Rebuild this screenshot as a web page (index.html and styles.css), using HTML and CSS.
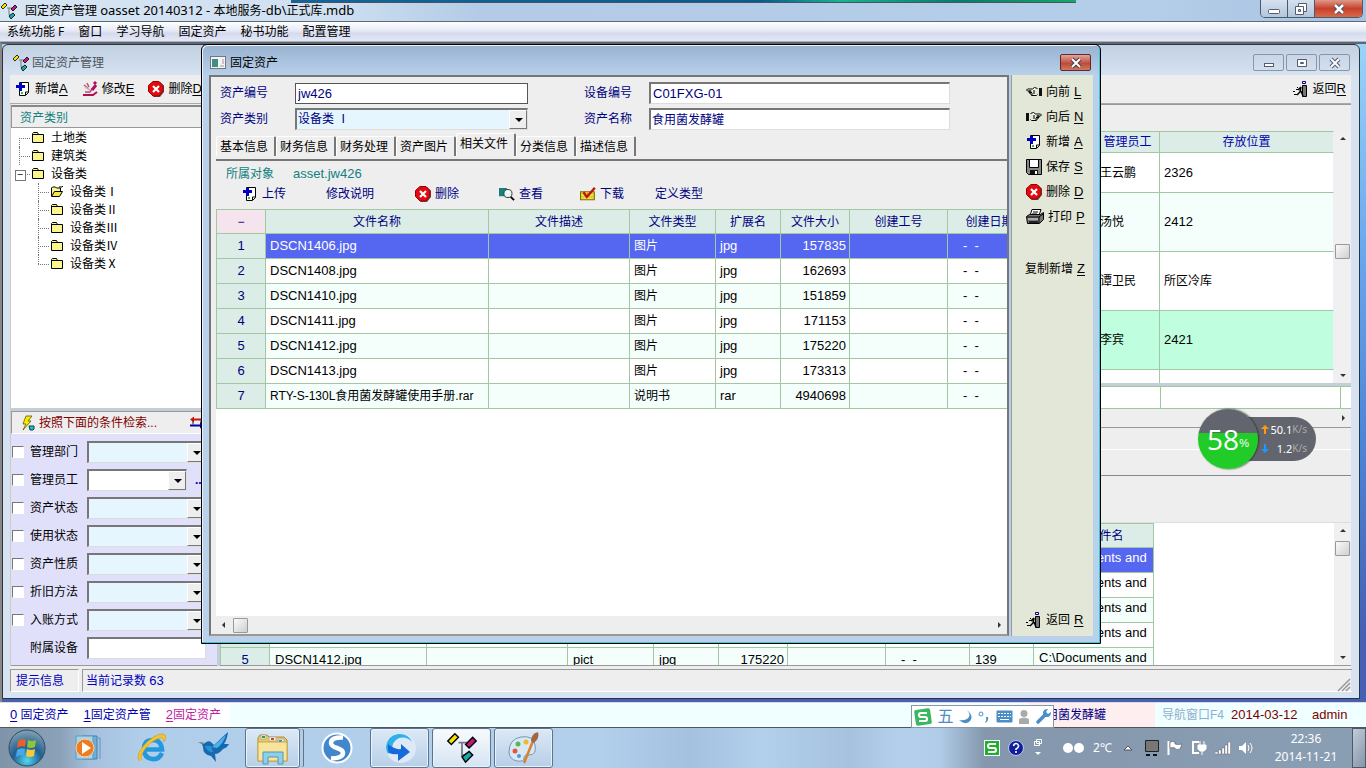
FILE: index.html
```html
<!DOCTYPE html>
<html lang="zh-CN">
<head>
<meta charset="utf-8">
<title>固定资产管理 oasset</title>
<link rel="stylesheet" href="styles.css">
</head>
<body>
<svg class="defs" aria-hidden="true">
  <symbol id="i-nodes" viewBox="0 0 18 18">
    <path d="M7 6h5M9 6v7h4" fill="none" stroke="#778" />
    <path d="M1 5l4-4 2 2-4 4z" fill="#f2e600" stroke="#000" stroke-width=".8"/>
    <path d="M11 7l4-4 2 2-4 4z" fill="#c01878" stroke="#000" stroke-width=".8"/>
    <path d="M9 14l4-3 2 2-4 4z" fill="#18a8a8" stroke="#000" stroke-width=".8"/>
  </symbol>
  <symbol id="i-add" viewBox="0 0 14 16">
    <path d="M3.500 1.500h9v10l-3 3h-6z" fill="#fff" stroke="#000"/>
    <path d="M9.500 14v-3h3" fill="none" stroke="#000"/>
    <path d="M3 2h3v2h3v3h-3v3h-3v-3h-3v-3h3z" fill="#0000c0"/>
    <path d="M5 12h2" stroke="#3b3" stroke-width="2"/>
  </symbol>
  <symbol id="i-edit" viewBox="0 0 16 16">
    <path d="M1 14h10l4-3" fill="none" stroke="#b01050" stroke-width="2"/>
    <path d="M3 11h5l2-3M2 4l4 3M5 2l2 4" fill="none" stroke="#c84878" stroke-width="1.500"/>
    <path d="M10 9l4-5M12 3l2-2" stroke="#b01060" stroke-width="3"/>
    <path d="M3 6l5 3" stroke="#bbb" stroke-width="2"/>
  </symbol>
  <symbol id="i-del" viewBox="0 0 16 16">
    <path d="M5 1h7l4 4v6l-4 5H6l-4-4z" fill="#555"/>
    <path d="M5 .5h6l4 4v6l-4 4.500H5l-4.500-4.500v-6z" fill="#e00a10" stroke="#900"/>
    <path d="M5 5l6 6M11 5l-6 6" stroke="#fff" stroke-width="2.200"/>
  </symbol>
  <symbol id="i-exit" viewBox="0 0 16 16">
    <path d="M9.500 4.500h4v11h-4z" fill="#777" stroke="#000"/>
    <path d="M9.500 .5h3v2h-3z" fill="#fff" stroke="#000080"/>
    <path d="M0 10.500h2M3 8.500h2M1 13.500h3M4 6.500h1" stroke="#000"/>
    <path d="M4 14l3-3 1-5M8 10l2 5M5 9l3-3" stroke="#000" stroke-width="1.500" fill="none"/>
  </symbol>
  <symbol id="i-folder" viewBox="0 0 14 13">
    <path d="M1.500 11.500v-9l1-1h4l1 2h5v8z" fill="#fbf68c" stroke="#000"/>
    <path d="M2 3.500h6" stroke="#000"/>
  </symbol>
  <symbol id="i-open" viewBox="0 0 14 13">
    <path d="M1.500 11V3l1-1h3l1 1h4v3" fill="#fbf68c" stroke="#000"/>
    <path d="M1.500 11.500l3-5h8l-3 5z" fill="#f0e850" stroke="#000"/>
    <path d="M9 2h3l1-1" stroke="#000" fill="none"/>
  </symbol>
  <symbol id="i-bolt" viewBox="0 0 14 16">
    <path d="M5 1h6L7 6h3l-8 9 3-6H2z" fill="#f2ee00" stroke="#665500" stroke-width=".8"/>
    <path d="M8 11h5v3l-1 1h-3z" fill="#20c0d0" stroke="#044"/>
  </symbol>
  <symbol id="i-swap" viewBox="0 0 14 12">
    <path d="M2 3h12" stroke="#d01010" stroke-width="2"/>
    <path d="M4 0L0 3l4 3z" fill="#d01010"/>
    <path d="M0 9h10" stroke="#0000b0" stroke-width="2"/>
    <path d="M10 5.500l4 3.500-4 3z" fill="#0000b0"/>
    <path d="M3 4v4M11 4v4" stroke="#222"/>
  </symbol>
  <symbol id="i-form" viewBox="0 0 16 14">
    <rect x=".5" y=".5" width="15" height="12" fill="#f4f4f4" stroke="#777"/>
    <rect x="2" y="3" width="6" height="8" fill="#3f8f86"/>
    <path d="M13 3v5M10 10h4" stroke="#999"/>
  </symbol>
  <symbol id="i-prev" viewBox="0 0 16 12">
    <path d="M13 2h3v8h-3z" fill="#111"/>
    <path d="M11.500 2.500l-3-1-2 1.500h-5l-1 1 1 1h4M5 5H3v1.500h3M4 6.500v1.500h3M5.500 8.500v1h5l1-1" fill="#fff" stroke="#000"/>
    <path d="M7 5h2M7 7h2" stroke="#000"/>
  </symbol>
  <symbol id="i-next" viewBox="0 0 16 12">
    <path d="M0 2h3v8H0z" fill="#111"/>
    <path d="M4.500 2.500l3-1 2 1.500h5l1 1-1 1h-4M11 5h2v1.500h-3M12 6.500v1.500H9M10.500 8.500v1h-5l-1-1" fill="#fff" stroke="#000"/>
    <path d="M7 5h2M7 7h2" stroke="#000"/>
  </symbol>
  <symbol id="i-save" viewBox="0 0 16 16">
    <path d="M.5 .5h15v15h-13l-2-2z" fill="#888" stroke="#000"/>
    <path d="M3.500 .5h9v8h-9z" fill="#fff" stroke="#000"/>
    <path d="M4 11h8v4H4z" fill="#111"/><path d="M9 12h2v3H9z" fill="#fff"/>
  </symbol>
  <symbol id="i-print" viewBox="0 0 18 16">
    <path d="M6 .5h9l-2 6H4z" fill="#fff" stroke="#000"/>
    <path d="M7 3h5M6 5h5" stroke="#000"/>
    <path d="M.5 7.500l3-2h11l3-2v7l-4 4h-12z" fill="#777" stroke="#000"/>
    <path d="M1 8h12l4-3M13 8v6" fill="none" stroke="#000"/>
    <path d="M2 10h10" stroke="#ddd"/><path d="M3 12h9v2H3z" fill="#222"/>
  </symbol>
  <symbol id="i-view" viewBox="0 0 17 15">
    <path d="M0 1h8l2 3v6H0z" fill="#178078"/>
    <circle cx="9.500" cy="7" r="4.300" fill="#e8f4f4" stroke="#333"/>
    <path d="M8 5l3 1" stroke="#fff"/><path d="M12.500 10.500L16 14" stroke="#000" stroke-width="2"/>
  </symbol>
  <symbol id="i-down" viewBox="0 0 14 13">
    <path d="M.5 4.500h12v7H.5z" fill="#efe23c" stroke="#7a6c00"/>
    <path d="M2 6h9M2 9h9" stroke="#b8a810" stroke-dasharray="1 1"/>
    <path d="M3 5l3 4 7-8" fill="none" stroke="#c01010" stroke-width="2"/>
  </symbol>
</svg>

<header class="app-title">
  <svg class="i18"><use href="#i-nodes"/></svg>
  <h1>固定资产管理 <span>oasset 20140312 - </span>本地服务<span>-db\</span>正式库<span>.mdb</span></h1>
  <div class="peek"></div>
  <div class="caption">
    <button aria-label="最小化"><svg width="14" height="12"><rect x="1.500" y="6.500" width="11" height="4" rx="1" fill="#fff" stroke="#555c70"/></svg></button>
    <button aria-label="还原"><svg width="14" height="14"><path d="M4.500 1.500h8v8h-8z" fill="#fff" stroke="#555c70"/><path d="M1.500 4.500h8v8h-8z" fill="#fff" stroke="#555c70"/><path d="M4.500 7.500h2v2h-2z" fill="#b5c8dc" stroke="#555c70"/></svg></button>
    <button class="close" aria-label="关闭"><svg width="14" height="12"><path d="M3 2l8 8M11 2l-8 8" stroke="#444c60" stroke-width="4.500"/><path d="M3 2l8 8M11 2l-8 8" stroke="#fff" stroke-width="2.500"/></svg></button>
  </div>
</header>

<nav class="menubar">
  <button>系统功能 F</button><button>窗口</button><button>学习导航</button><button>固定资产</button><button>秘书功能</button><button>配置管理</button>
</nav>

<main class="workspace">
  <section class="win main-win">
    <div class="win-title">
      <svg class="i18"><use href="#i-nodes"/></svg><h2>固定资产管理</h2>
      <div class="win-buttons">
        <button aria-label="最小化"><svg width="14" height="12"><rect x="2.500" y="6.500" width="9" height="3" fill="#fff" stroke="#555c70"/></svg></button>
        <button aria-label="最大化"><svg width="14" height="12"><path d="M2.500 2.500h9v7h-9z" fill="#fff" stroke="#555c70"/><path d="M5.500 5.500h3v1h-3z" stroke="#555c70" fill="none"/></svg></button>
        <button aria-label="关闭"><svg width="14" height="12"><path d="M3 2l8 8M11 2l-8 8" stroke="#555c70" stroke-width="4"/><path d="M3 2l8 8M11 2l-8 8" stroke="#fff" stroke-width="2"/></svg></button>
      </div>
    </div>
    <div class="toolbar">
      <button><svg class="i16"><use href="#i-add"/></svg>新增<u>A</u></button>
      <button><svg class="i16"><use href="#i-edit"/></svg>修改<u>E</u></button>
      <button><svg class="i16"><use href="#i-del"/></svg>删除<u>D</u></button>
      <button class="right"><svg class="i16"><use href="#i-exit"/></svg>返回<u>R</u></button>
    </div>
    <div class="panes">
      <aside class="left">
        <h3 class="tree-head">资产类别</h3>
        <ul class="tree">
          <li><svg class="i14"><use href="#i-folder"/></svg>土地类</li>
          <li><svg class="i14"><use href="#i-folder"/></svg>建筑类</li>
          <li class="expanded"><svg class="i14"><use href="#i-folder"/></svg>设备类
            <ul>
              <li><svg class="i14"><use href="#i-open"/></svg>设备类<b>Ⅰ</b></li>
              <li><svg class="i14"><use href="#i-folder"/></svg>设备类<b>Ⅱ</b></li>
              <li><svg class="i14"><use href="#i-folder"/></svg>设备类<b>Ⅲ</b></li>
              <li><svg class="i14"><use href="#i-folder"/></svg>设备类<b>Ⅳ</b></li>
              <li><svg class="i14"><use href="#i-folder"/></svg>设备类<b>Ⅹ</b></li>
            </ul>
          </li>
        </ul>
        <div class="search-head"><svg class="i16"><use href="#i-bolt"/></svg><span>按照下面的条件检索...</span><svg class="i14"><use href="#i-swap"/></svg></div>
        <form class="filters">
          <div><label><input type="checkbox">管理部门</label><span class="sel"><select aria-label="管理部门"><option></option></select></span></div>
          <div><label><input type="checkbox">管理员工</label><span class="sel plain short"><select aria-label="管理员工"><option></option></select></span><button type="button" class="more">...</button></div>
          <div><label><input type="checkbox">资产状态</label><span class="sel"><select aria-label="资产状态"><option></option></select></span></div>
          <div><label><input type="checkbox">使用状态</label><span class="sel"><select aria-label="使用状态"><option></option></select></span></div>
          <div><label><input type="checkbox">资产性质</label><span class="sel"><select aria-label="资产性质"><option></option></select></span></div>
          <div><label><input type="checkbox">折旧方法</label><span class="sel"><select aria-label="折旧方法"><option></option></select></span></div>
          <div><label><input type="checkbox">入账方式</label><span class="sel"><select aria-label="入账方式"><option></option></select></span></div>
          <div><label class="nobox" for="attached">附属设备</label><input class="field" id="attached" type="text"></div>
        </form>
      </aside>
      <div class="right-pane">
        <div class="band band-top"></div>
        <div class="scroll-area assets">
          <table class="grid">
            <colgroup><col><col class="w63"><col class="w174"></colgroup>
            <thead><tr><th></th><th>管理员工</th><th>存放位置</th></tr></thead>
            <tbody>
              <tr class="h40"><td></td><td>王云鹏</td><td class="n">2326</td></tr>
              <tr class="alt"><td></td><td>汤悦</td><td class="n">2412</td></tr>
              <tr><td></td><td>谭卫民</td><td>所区冷库</td></tr>
              <tr class="cur"><td></td><td>李宾</td><td class="n">2421</td></tr>
              <tr><td></td><td></td><td></td></tr>
            </tbody>
          </table>
          <div class="vbar"><i class="up"></i><b class="low"></b><i class="dn"></i></div>
        </div>
        <div class="sums"><span></span><span class="w180"></span><span class="w10"></span></div>
        <div class="hbar"><i class="rt"></i></div>
        <div class="band band-a"></div>
        <div class="band band-b"></div>
        <div class="band band-c"></div>
        <div class="scroll-area files">
          <div class="clip">
          <table class="grid file-grid">
            <colgroup><col class="w50"><col class="w157"><col class="w141"><col class="w86"><col class="w65"><col class="w69"><col class="w98"><col class="w84"><col class="w64"><col class="w120"></colgroup>
            <thead><tr><th class="pink"></th><th></th><th></th><th></th><th></th><th></th><th></th><th></th><th></th><th>保存文件名</th></tr></thead>
            <tbody>
              <tr class="sel-row"><th></th><td></td><td></td><td></td><td></td><td></td><td></td><td></td><td></td><td class="path"><div>C:\Documents and Settings\Admin</div></td></tr>
              <tr><th></th><td></td><td></td><td></td><td></td><td></td><td></td><td></td><td></td><td class="path"><div>C:\Documents and Settings\Admin</div></td></tr>
              <tr class="alt"><th></th><td></td><td></td><td></td><td></td><td></td><td></td><td></td><td></td><td class="path"><div>C:\Documents and Settings\Admin</div></td></tr>
              <tr><th></th><td></td><td></td><td></td><td></td><td></td><td></td><td></td><td></td><td class="path"><div>C:\Documents and Settings\Admin</div></td></tr>
              <tr class="alt"><th>5</th><td>DSCN1412.jpg</td><td></td><td>pict</td><td>jpg</td><td class="r">175220</td><td></td><td class="d">- &nbsp;-</td><td>139</td><td class="path"><div>C:\Documents and</div></td></tr>
            </tbody>
          </table>
          </div>
          <div class="vbar"><i class="up"></i><b></b><i class="dn"></i></div>
        </div>
      </div>
    </div>
    <footer class="status">
      <span class="tip">提示信息</span><span class="count">当前记录数 <em>63</em></span>
      <svg width="14" height="14"><path d="M1 13L13 1M5 13l8-8M9 13l4-4" stroke="#999" stroke-width="1.500"/></svg>
    </footer>
  </section>

  <section class="win dialog" role="dialog" aria-label="固定资产">
    <div class="win-title">
      <svg class="i16"><use href="#i-form"/></svg><h2>固定资产</h2>
      <div class="win-buttons"><button class="close" aria-label="关闭"><svg width="14" height="12"><path d="M3 2l8 8M11 2l-8 8" stroke="#4a3c48" stroke-width="4"/><path d="M3 2l8 8M11 2l-8 8" stroke="#fff" stroke-width="2"/></svg></button></div>
    </div>
    <div class="dialog-body">
      <div class="detail">
        <form class="fields">
          <label for="f1">资产编号</label><input id="f1" class="flat" type="text" value="jw426">
          <label for="f2">设备编号</label><input id="f2" class="field" type="text" value="C01FXG-01">
          <label for="f3">资产类别</label><span class="sel"><select id="f3"><option>设备类 Ⅰ</option></select></span>
          <label for="f4">资产名称</label><input id="f4" class="field cjk" type="text" value="食用菌发酵罐">
        </form>
        <div class="tabs" role="tablist">
          <button role="tab">基本信息</button><button role="tab">财务信息</button><button role="tab">财务处理</button><button role="tab">资产图片</button><button role="tab" class="on" aria-selected="true">相关文件</button><button role="tab">分类信息</button><button role="tab">描述信息</button>
        </div>
        <div class="pane">
          <div class="owner"><span>所属对象</span><span class="n">asset.jw426</span></div>
          <div class="actions">
            <button><svg class="i16"><use href="#i-add"/></svg>上传</button>
            <button>修改说明</button>
            <button><svg class="i16"><use href="#i-del"/></svg>删除</button>
            <button><svg class="i16"><use href="#i-view"/></svg>查看</button>
            <button><svg class="i16"><use href="#i-down"/></svg>下载</button>
            <button>定义类型</button>
          </div>
          <div class="clip">
          <table class="grid file-grid">
            <colgroup><col class="w50"><col class="w223"><col class="w141"><col class="w86"><col class="w65"><col class="w69"><col class="w98"><col class="w84"></colgroup>
            <thead><tr><th class="pink">−</th><th>文件名称</th><th>文件描述</th><th>文件类型</th><th>扩展名</th><th>文件大小</th><th>创建工号</th><th>创建日期</th></tr></thead>
            <tbody>
              <tr class="sel-row"><th>1</th><td>DSCN1406.jpg</td><td></td><td class="cjk">图片</td><td>jpg</td><td class="r">157835</td><td></td><td class="d">- &nbsp;-</td></tr>
              <tr><th>2</th><td>DSCN1408.jpg</td><td></td><td class="cjk">图片</td><td>jpg</td><td class="r">162693</td><td></td><td class="d">- &nbsp;-</td></tr>
              <tr class="alt"><th>3</th><td>DSCN1410.jpg</td><td></td><td class="cjk">图片</td><td>jpg</td><td class="r">151859</td><td></td><td class="d">- &nbsp;-</td></tr>
              <tr><th>4</th><td>DSCN1411.jpg</td><td></td><td class="cjk">图片</td><td>jpg</td><td class="r">171153</td><td></td><td class="d">- &nbsp;-</td></tr>
              <tr class="alt"><th>5</th><td>DSCN1412.jpg</td><td></td><td class="cjk">图片</td><td>jpg</td><td class="r">175220</td><td></td><td class="d">- &nbsp;-</td></tr>
              <tr><th>6</th><td>DSCN1413.jpg</td><td></td><td class="cjk">图片</td><td>jpg</td><td class="r">173313</td><td></td><td class="d">- &nbsp;-</td></tr>
              <tr class="alt"><th>7</th><td class="cjk">RTY-S-130L食用菌发酵罐使用手册.rar</td><td></td><td class="cjk">说明书</td><td>rar</td><td class="r">4940698</td><td></td><td class="d">- &nbsp;-</td></tr>
            </tbody>
          </table>
          </div>
          <div class="hbar"><i class="lt"></i><b></b><i class="rt"></i></div>
        </div>
      </div>
      <div class="side">
        <button><svg class="i16"><use href="#i-prev"/></svg>向前 <u>L</u></button>
        <button><svg class="i16"><use href="#i-next"/></svg>向后 <u>N</u></button>
        <button><svg class="i16"><use href="#i-add"/></svg>新增 <u>A</u></button>
        <button><svg class="i16"><use href="#i-save"/></svg>保存 <u>S</u></button>
        <button><svg class="i16"><use href="#i-del"/></svg>删除 <u>D</u></button>
        <button><svg class="i18"><use href="#i-print"/></svg>打印 <u>P</u></button>
        <button class="copy">复制新增 <u>Z</u></button>
        <button class="back"><svg class="i16"><use href="#i-exit"/></svg>返回 <u>R</u></button>
      </div>
    </div>
  </section>

  <div class="meter">
    <div class="ball"><strong>58</strong><small>%</small></div>
    <div class="speeds">
      <div><svg width="8" height="10"><path d="M4 0l4 4H5v5H3V4H0z" fill="#ff9a10"/></svg><span>50.1</span><small>K/s</small></div>
      <div><svg width="8" height="10"><path d="M4 9L0 5h3V0h2v5h3z" fill="#1e98ff"/></svg><span>1.2</span><small>K/s</small></div>
    </div>
  </div>
</main>

<div class="navstrip">
  <div class="links"><a href="#w0"><u>0</u> 固定资产</a><a href="#w1"><u>1</u>固定资产管</a><a href="#w2" class="cur"><u>2</u>固定资产</a></div>
  <span class="asset-name">食用菌发酵罐</span>
  <span class="hint">导航窗口F4</span>
  <span class="date">2014-03-12</span>
  <span class="user">admin</span>
  <div class="ime">
    <svg width="18" height="18" viewBox="0 0 18 18"><rect x="1" y="1" width="16" height="16" rx="2" fill="#38b860" transform="rotate(-8 9 9)"/><path d="M13 5H7Q5 5 5 7t2 2h4q2 0 2 2t-2 2H5" fill="none" stroke="#fff" stroke-width="2.200"/></svg>
    <span>五</span>
    <svg width="14" height="14"><path d="M8 0q5 6 0 9-4 2-8 1 5 5 10 2 6-5-2-12z" fill="#4a8ec8"/></svg>
    <svg width="12" height="16"><circle cx="3" cy="5" r="2" fill="none" stroke="#4a8ec8"/><path d="M8 8h2q1 4-3 6 2-3 1-6z" fill="#4a8ec8"/></svg>
    <svg width="17" height="13"><rect x=".5" y=".5" width="16" height="12" rx="1" fill="#4a8ec8"/><path d="M2 3.500h13M2 6.500h13" stroke="#fff" stroke-dasharray="2 1"/><path d="M4 9.500h9" stroke="#fff"/></svg>
    <svg width="12" height="14"><circle cx="6" cy="3.500" r="3.500" fill="#aaa"/><path d="M1 14V9q5-3 10 0v5z" fill="#aaa"/></svg>
    <svg width="15" height="15"><path d="M2 13l7-7" stroke="#4a8ec8" stroke-width="3.500" stroke-linecap="round"/><path d="M12 0q-5 0-5 4t4 4 4-5l-3 2-2-2z" fill="#4a8ec8"/></svg>
  </div>
</div>

<footer class="taskbar">
  <button class="start" aria-label="开始"><svg width="38" height="38" viewBox="0 0 38 38"><defs><radialGradient id="orb" cx=".5" cy=".85" r=".8"><stop offset="0" stop-color="#50d8f0"/><stop offset=".5" stop-color="#206090"/><stop offset="1" stop-color="#7a9cb0"/></radialGradient></defs><circle cx="19" cy="19" r="18" fill="url(#orb)" stroke="#314b60"/><path d="M10 12q4-3 8-1l-1 7q-4-2-8 1z" fill="#e8602c"/><path d="M20 11q4 2 8 0l-1 7q-4 2-8 0z" fill="#8cc63c"/><path d="M9 21q4-3 8-1l-1 7q-4-2-8 1z" fill="#48a8e8"/><path d="M19 20q4 2 8 0l-1 7q-4 2-8 0z" fill="#fcc838"/></svg></button>
  <button class="app" aria-label="媒体播放器"><svg width="28" height="28"><path d="M8 2h15v23H8z" fill="#6ab0d8" stroke="#4880a8"/><path d="M24 4h2v21" fill="none" stroke="#5a98c0"/><rect x="2" y="2" width="17" height="23" fill="#a8d4ea" stroke="#5a98c0"/><circle cx="11" cy="14" r="9" fill="#f07c20" stroke="#fbd0a0"/><path d="M8 8l9 6-9 6z" fill="#fff"/></svg></button>
  <button class="app" aria-label="浏览器"><svg width="32" height="32"><path d="M26 21q-3 7-10 6-8-1-8-10 0-9 9-9 8 0 9 9.500H10" fill="none" stroke="#2498dc" stroke-width="4.500"/><path d="M3 29Q-1 22 11 10 24-1 29 3q2 2-1 7 0-5-4-4-8 2-15 11-6 9-3 11" fill="#f4c430" stroke="#c89820" stroke-width=".6"/></svg></button>
  <button class="app" aria-label="蜂鸟"><svg width="32" height="32"><path d="M0 10l7 1q3-3 6-1l3 3L30 0q-1 8-4 12l5 0q-2 4-6 5-4 5-8 5l1 8-5-6q-8-1-8-9l-1-3z" fill="#1668b0"/><path d="M14 15L28 3q-3 9-9 13z" fill="#4cb0e8"/><path d="M7 14q3 7 8 6l-2-6z" fill="#2c90d4"/><path d="M0 10l7 1-1 1z" fill="#c8a050"/></svg></button>
  <button class="app run stack" aria-label="资源管理器"><svg width="34" height="34"><path d="M2 7l2-3h7l2 2h15l3 3v21H2z" fill="#e8c860" stroke="#b08c30"/><path d="M5 4h5v4H5zM13 6h7v4h-7zM22 8h6v3h-6z" fill="#fff" stroke="#b0b0a0"/><path d="M6 5h3v2H6z" fill="#3a9c48"/><path d="M15 7h3v2h-3z" fill="#d04030"/><path d="M23 9h3v2h-3z" fill="#3888c8"/><path d="M2 11h29v19H2z" fill="#f8e49a" stroke="#c8a848"/><path d="M7 33V21h20v12h-5v-7H12v7z" fill="#8cd0ec" stroke="#5098b8"/></svg></button>
  <button class="app wide" aria-label="搜狗浏览器"><svg width="32" height="32"><circle cx="16" cy="16" r="15.500" fill="#fff"/><circle cx="16" cy="16" r="13.500" fill="#4286cc"/><path d="M22 5.500Q10 5 10 11q0 3 6 5t6 5q0 5-12 5.500" fill="none" stroke="#fff" stroke-width="4.500"/></svg></button>
  <button class="app run" aria-label="同步"><svg width="32" height="32"><circle cx="17" cy="16" r="15" fill="#dde9f6"/><path d="M28 10Q24 1 14 2 3 4 2 15q0 4 2 7l4-4Q8 9 15 6q8-2 13 4z" fill="#30b0e8"/><path d="M5 21q5 2 9 1v7l12-9-9-8v5q-6 1-13-5-1 5 1 9z" fill="#1768d8"/></svg></button>
  <button class="app run active" aria-label="固定资产管理"><svg width="32" height="32" viewBox="0 0 18 18"><use href="#i-nodes"/></svg></button>
  <button class="app run" aria-label="画图"><svg width="34" height="34"><path d="M2 21Q2 8 14 6t14 8-6 10q-5-1-5 3 0 4-7 3-8-2-8-9z" fill="#d8e8f4" stroke="#7098b8"/><circle cx="8" cy="20" r="2.500" fill="#e85838"/><circle cx="11" cy="13" r="2.500" fill="#58b858"/><circle cx="19" cy="11" r="2.500" fill="#f0b830"/><circle cx="12" cy="25" r="2" fill="#4898e0"/><path d="M17 32l9-22" stroke="#d88030" stroke-width="2.500"/><path d="M24 10q0-7 7-9 2 6-4 11z" fill="#a06840"/></svg></button>
  <div class="tray">
    <svg width="16" height="16"><rect x=".5" y=".5" width="15" height="15" fill="#20b030" stroke="#fff"/><path d="M12 4H6Q4 4 4 6t2 2h4q2 0 2 2t-2 2H4" fill="none" stroke="#fff" stroke-width="2"/></svg>
    <svg class="help" width="16" height="16"><circle cx="8" cy="8" r="7.500" fill="#10209c" stroke="#c0c8e8"/><path d="M5.500 6Q6 3.500 8 3.500t2.500 2-2.500 3.500v1M8 11v2" fill="none" stroke="#fff" stroke-width="1.600"/></svg>
    <svg class="restore" width="10" height="20"><path d="M3.500 1.500h5v4h-5zM1.500 3.500h5v4h-5z" fill="#8596aa" stroke="#fff"/><path d="M2 14h6l-3 3z" fill="#fff"/></svg>
    <svg class="weather" width="22" height="12"><circle cx="5" cy="6" r="5" fill="#fff"/><circle cx="16" cy="6" r="5" fill="#fff"/></svg>
    <span class="temp">2℃</span>
    <svg class="arrow" width="10" height="6"><path d="M1 5l4-4 4 4z" fill="#fff" stroke="#556"/></svg>
    <svg width="14" height="16"><path d="M.5 .5h13v11H.5z" fill="#777" stroke="#222"/><path d="M1 15h4M8 15h4" stroke="#111" stroke-width="2"/></svg>
    <svg width="16" height="16"><path d="M1.500 1v14" stroke="#fff" stroke-width="2"/><path d="M3 2q3-1 5 0v2q3 1 7 0l-2 5q-3 1-5 0V8q-2-1-5 0z" fill="#fff" stroke="#556" stroke-width=".6"/></svg>
    <svg width="16" height="16"><path d="M8 2H2v11h6" fill="none" stroke="#fff" stroke-width="2"/><path d="M7 5h8v4l-2 2H9L7 9zM9 1v4M13 1v4M11 11v4" fill="#fff" stroke="#fff"/></svg>
    <svg width="16" height="14"><path d="M0 11h3v2H0zM3.500 9h2.500v4H3.500zM7 7h2.500v6H7zM10 4h2.500v9H10zM13 1h2.500v12H13z" fill="#fff" stroke="#556" stroke-width=".4"/></svg>
    <svg width="16" height="14"><path d="M0 5h3l4-4v12L3 9H0z" fill="#fff"/><path d="M9 4q2 3 0 6M11 2q4 5 0 10" fill="none" stroke="#fff"/></svg>
    <time>22:36<br>2014-11-21</time>
    <button class="peek-desk" aria-label="显示桌面"></button>
  </div>
</footer>
</body>
</html>
```
FILE: styles.css
```css
* { box-sizing: border-box; }
body {
  margin: 0; height: 100vh; overflow: hidden;
  display: flex; flex-direction: column;
  font: 12px/16px "Liberation Sans", "Noto Sans CJK SC", sans-serif;
  color: #000; background: #eee;
}
button { font: inherit; color: inherit; background: none; border: 0; padding: 0; white-space: nowrap; display: flex; align-items: center; gap: 4px; }
h1, h2, h3 { margin: 0; font-size: 12px; font-weight: normal; white-space: nowrap; }
u { font-size: 13px; text-underline-offset: 2px; }
svg { flex: none; display: block; }
.defs { position: absolute; width: 0; height: 0; }
.i14 { width: 14px; height: 13px; }
.i16 { width: 16px; height: 16px; }
.i18 { width: 18px; height: 18px; }
.n { font-size: 13px; }

/* application frame */
.app-title { position: relative; flex: none; height: 22px; display: flex; align-items: center; padding-right: 3px; background: linear-gradient(90deg, #d7e5f3 0, #cfe0f1 330px, #b3cbe6 480px, #b4cde8 1150px, #a8c4e2); border-bottom: 1px solid #5c6b7c; }
.app-title .i18 { margin-right: 7px; }
.app-title h1 { font-family: "Noto Sans", "Noto Sans CJK SC", sans-serif; }
.app-title h1 span { font-size: 13px; }
.peek { position: absolute; top: 0; left: 291px; width: 785px; height: 3px; background: linear-gradient(90deg, #15639a, #0e5a8c 60%, #19b48c 70%, #0a7a6a 85%, #18a860); border-bottom: 1px solid #456; }
.caption { margin-left: auto; align-self: flex-start; display: flex; height: 18px; border: 1px solid #4c5a6c; border-top: 0; border-radius: 0 0 5px 5px; overflow: hidden; }
.caption button { width: 27px; justify-content: center; background: linear-gradient(#d5e1ee, #b3c6dc); border-right: 1px solid #4c5a6c; }
.caption .close { width: 47px; border: 0; background: linear-gradient(#e09a88, #c8402c 50%, #d86a48); }
.menubar { flex: none; height: 20px; display: flex; gap: 14px; padding: 0 7px; background: linear-gradient(#fff, #e6eaf6 45%, #d5daed 60%, #e4e8f6); border-bottom: 1px solid #a8b0c4; font-family: "Noto Sans", "Noto Sans CJK SC", sans-serif; }
.workspace { position: relative; flex: 1; min-height: 0; background: linear-gradient(#9ad4f8 0, #6aaaf0 30%, #4c86d8 60%, #4560b4 90%); border-top: 2px solid #60666e; border-left: 2px solid #888; }

/* windows */
.win { position: absolute; display: flex; flex-direction: column; border: 1px solid #2c3440; border-radius: 6px 6px 0 0; }
.win-title { flex: none; display: flex; align-items: center; height: 30px; padding-top: 5px; font-family: "Noto Sans", "Noto Sans CJK SC", sans-serif; }
.win-buttons { margin-left: auto; display: flex; gap: 2px; }
.win-buttons button { width: 31px; height: 17px; justify-content: center; border: 1px solid #8796a8; border-radius: 2px; }
.win-buttons .close { border-color: #6b2620; background: linear-gradient(#dfa59c, #c25648 50%, #b84634 51%, #cf7a62); }
.main-win { left: 0; top: 0; right: 6px; bottom: 3px; padding: 0 8px 6px 7px; background: linear-gradient(#c1d0e2, #d6e2f0 30px, #d7e3f1); }
.main-win .win-title { padding-right: 1px; }
.main-win .win-title h2 { margin-left: 2px; color: #4c545c; }
.main-win .win-title .i18 { margin-left: 2px; }
.toolbar { flex: none; height: 29px; display: flex; align-items: center; gap: 14px; padding: 0 5px; background: #eee; border-bottom: 1px solid #aaa; }
.toolbar u { margin-left: -4px; }
.toolbar .right { margin-left: auto; }
.panes { flex: 1; min-height: 0; display: flex; background: #eee; }
.left { flex: none; width: 207px; display: flex; flex-direction: column; border-left: 1px solid #ccc; }
.tree-head { margin-top: 1px; height: 23px; line-height: 22px; padding-left: 8px; color: #108080; border: 1px solid #999; border-top: 2px solid #888; }
.tree { flex: 1; background: #fff; border-bottom: 3px solid #c3ced9; padding: 1px 0 0 8px; }
.tree, .tree ul { margin: 0; list-style: none; line-height: 18px; }
.tree ul { padding: 0 0 0 19px; margin-left: -12px; }
.tree li { position: relative; padding-left: 12px; white-space: nowrap; }
.tree li svg { display: inline-block; vertical-align: -2px; margin-right: 6px; }
.tree li b { font: 12px/16px "Noto Sans CJK SC", sans-serif; }
.tree li::before { content: ""; position: absolute; left: 0; top: 9px; width: 11px; border-top: 1px dotted #777; }
.tree li::after { content: ""; position: absolute; left: 0; top: 0; height: 18px; border-left: 1px dotted #777; }
.tree > li:first-child::after { top: 9px; height: 9px; }
.tree li:last-child::after { height: 9px; }
.tree > .expanded::after { content: "−"; left: -4px; top: 5px; width: 9px; height: 9px; border: 1px solid #777; background: #fff; line-height: 7px; font-size: 10px; text-align: center; }
.search-head { flex: none; height: 23px; display: flex; align-items: center; gap: 3px; padding: 0 12px 0 8px; border: 1px solid #999; border-bottom-color: #fff; color: #800000; }
.search-head .i14 { margin-left: auto; }
.filters { flex: none; padding: 4px 0 3px 1px; background: #e0e0fa; display: grid; grid-auto-rows: 28px; border-bottom: 1px solid #999; }
.filters > div { display: flex; align-items: center; }
.filters label { width: 75px; display: flex; align-items: center; gap: 5px; }
.filters .nobox { padding-left: 18px; }
.filters input[type=checkbox] { appearance: none; margin: 0 1px 0 0; width: 12px; height: 12px; background: #fff; border: 1px solid #fff; border-top: 1px solid #777; border-left: 1px solid #777; }
.field, .sel { height: 22px; background: #fff; border: 1px solid #ddd; border-top: 2px solid #777; border-left: 2px solid #777; font: 13px/16px "Liberation Sans", "Noto Sans CJK SC", sans-serif; color: #000080; padding: 0 2px; border-radius: 0; outline: 0; }
.field.cjk { font-size: 12px; padding: 0 1px 2px; }
.filters .field, .filters .sel { width: 119px; }
.filters .short { width: 100px; }
.sel { position: relative; display: flex; padding: 0; background: #e6f6fe; }
.plain { background: #fff; }
.sel select { appearance: none; flex: 1; width: 100%; border: 0; padding: 0 18px 2px 1px; background: transparent; font: inherit; font-size: 12px; color: inherit; outline: 0; }
.sel::after { content: ""; position: absolute; right: 0; top: 0; bottom: 0; width: 16px; background: #eee; border: 1px solid #fff; border-right-color: #777; border-bottom-color: #777; pointer-events: none; }
.sel::before { content: ""; position: absolute; z-index: 1; right: 4px; top: 8px; border: 4px solid transparent; border-top-color: #000; border-bottom: 0; pointer-events: none; }
.more { margin-left: 8px; color: #0000c0; font-weight: bold; }
.right-pane { flex: 1; min-width: 0; display: flex; flex-direction: column; border-left: 3px solid #c3ced9; }
.band { flex: none; background: #eee; }
.band-top { height: 27px; border-top: 1px solid #999; }
.band-a { height: 23px; border-top: 1px solid #999; border-bottom: 1px solid #fff; }
.band-b { height: 25px; }
.band-c { height: 48px; border-top: 1px solid #888; border-bottom: 1px solid #ddd; }
.scroll-area { display: flex; background: #fff; overflow: hidden; }
.assets { flex: none; height: 252px; }
.assets .grid { flex: 1; }
.files { flex: 1; min-height: 0; border-bottom: 1px solid #999; }
.files .clip { flex: 1; }
.clip { overflow: hidden; min-height: 0; background: #fff; }

/* scroll bars */
.vbar { flex: none; width: 17px; display: flex; flex-direction: column; align-items: center; padding: 6px 0; background: #f0f0f0; }
.vbar i, .hbar i { width: 0; height: 0; border: 3px solid transparent; }
.vbar .up { border-top: 0; border-bottom-color: #333; }
.vbar .dn { margin-top: auto; border-bottom: 0; border-top-color: #333; }
.vbar b, .hbar b { width: 15px; height: 15px; border: 1px solid #999; border-radius: 1px; background: linear-gradient(135deg, #fafafa, #cfcfd2); }
.vbar b { margin-top: 9px; }
.vbar .low { margin-top: 104px; }
.hbar { flex: none; height: 18px; display: flex; align-items: center; gap: 8px; padding: 0 6px; background: #eee; }
.hbar .lt { border-left: 0; border-right-color: #333; }
.hbar .rt { margin-left: auto; border-right: 0; border-left-color: #333; }
.sums { flex: none; height: 26px; display: flex; background: #fff; border-top: 3px solid #c3ced9; border-bottom: 1px solid #9dc79d; }
.sums span { border-right: 1px solid #9dc79d; flex: 1; border-top: 1px solid #9dc79d; }
.sums .w180 { flex: none; width: 180px; }
.sums .w10 { flex: none; width: 10px; border-right: 0; }

/* data grids */
.grid { table-layout: fixed; border-collapse: separate; border-spacing: 0; width: 100%; }
.grid th, .grid td { padding: 0 4px; border-right: 1px solid #a3c6a3; border-bottom: 1px solid #a3c6a3; overflow: hidden; white-space: nowrap; text-align: left; }
.grid th { background: #dcede7; font-weight: normal; color: #000080; text-align: center; }
.grid thead th { border-top: 1px solid #a3c6a3; height: 22px; padding: 0; }
.assets thead th { color: #0000b0; }
.assets td { height: 59px; background: #fff; }
.assets .h40 td { height: 40px; }
.assets th:last-child, .assets td:last-child { border-right-color: #eef; }
.grid .alt td { background: #f4fffc; }
.assets .cur td { background: #bfffdf; }
.file-grid { width: 0; }
.file-grid thead th { height: 25px; }
.file-grid tbody th, .file-grid tbody td { height: 25px; font-size: 13px; }
.file-grid tbody .cjk { font-size: 12px; }
.file-grid th:first-child { border-left: 1px solid #a3c6a3; }
.grid .pink { background: #f5e3ee; }
.grid .sel-row td { background: #5566f0; color: #fff; }
.grid .r { text-align: right; padding-right: 3px; }
.grid .d { padding-left: 15px; }
.files td { padding-left: 5px; }
.path div { height: 24px; line-height: 19px; overflow: hidden; white-space: normal; }
.w50 { width: 50px; } .w63 { width: 64px; } .w64 { width: 64px; } .w65 { width: 65px; } .w69 { width: 69px; }
.w84 { width: 84px; } .w86 { width: 86px; } .w98 { width: 98px; } .w120 { width: 120px; } .w141 { width: 141px; }
.w157 { width: 157px; } .w174 { width: 174px; } .w223 { width: 223px; }
.status { flex: none; height: 26px; display: flex; align-items: flex-end; gap: 3px; padding-top: 2px; background: #eee; color: #0000c0; }
.status span { height: 23px; line-height: 22px; border-top: 1px solid #999; border-left: 1px solid #999; border-bottom: 1px solid #fff; }
.status .tip { width: 69px; padding-left: 5px; border-right: 1px solid #fff; }
.status .count { flex: 1; padding-left: 3px; }
.status em { font-style: normal; font-size: 13px; }
.status svg { margin-left: -18px; }

/* asset dialog */
.dialog { left: 199px; top: 0; width: 900px; height: 600px; padding: 0 7px 7px; border-color: #000; background: linear-gradient(#98b2d0, #b8d0ea 30px, #b9d1ea); box-shadow: inset -1px -1px #38c8d8, inset 1px 1px #e8f2fa; }
.dialog .win-title { padding-right: 2px; padding-left: 1px; }
.dialog .win-title h2 { margin-left: 4px; }
.dialog-body { flex: 1; min-height: 0; display: flex; gap: 2px; }
.detail { flex: 1; min-width: 0; display: flex; flex-direction: column; background: #eee; border: 2px solid #777; border-bottom-color: #999; padding: 0 0 0 5px; }
.fields { flex: none; display: grid; grid-template-columns: 75px 233px 56px 65px 301px; gap: 4px 0; align-items: center; padding: 5px 0 0 4px; color: #000080; }
.fields label:nth-of-type(even) { grid-column: 4; }
.fields .flat { height: 21px; border: 1px solid #555; padding: 0 2px; font: 13px/16px "Liberation Sans", sans-serif; color: #000080; }
.tabs { flex: none; display: flex; align-items: flex-end; height: 27px; margin-top: 2px; padding-bottom: 3px; }
.tabs button { width: 60px; height: 20px; justify-content: center; padding-right: 3px; border-top: 1px solid #fff; border-left: 1px solid #fff; border-right: 2px solid #777; border-radius: 3px 2px 0 0; }
.tabs .on { height: 23px; padding-bottom: 3px; }
.pane { flex: 1; min-height: 0; display: flex; flex-direction: column; border-top: 2px solid #777; }
.pane .clip { flex: 1; }
.owner { flex: none; height: 24px; display: flex; align-items: center; gap: 19px; padding: 2px 0 0 10px; color: #108080; }
.actions { flex: none; height: 24px; display: grid; grid-template-columns: 84px 89px 84px 81px 75px auto; justify-content: start; align-items: center; padding: 0 0 6px 26px; color: #000080; }
.side { flex: none; width: 82px; display: flex; flex-direction: column; padding: 4px 0 4px 14px; background: #e3e7d7; border-left: 1px solid #999; }
.side button { height: 25px; }
.side .copy { margin: 27px 0 0 -1px; }
.side .back { margin-top: auto; }

/* network meter */
.meter { position: absolute; right: 50px; top: 364px; width: 118px; height: 62px; color: #fff; display: flex; align-items: center; }
.ball { position: relative; z-index: 1; flex: none; width: 60px; height: 60px; border-radius: 50%; background: linear-gradient(#62656e 40%, #22cc28 40%); display: flex; align-items: center; justify-content: center; box-shadow: 1px 0 2px #333; }
.ball strong { font: 400 28px/30px "Open Sans", sans-serif; }
.ball small { font-size: 11px; padding-top: 8px; }
.speeds { flex: 1; margin-left: -30px; height: 44px; border-radius: 0 22px 22px 0; background: #62656e; padding: 3px 9px 0 33px; font: 11px/19px "Noto Sans", sans-serif; }
.speeds div { display: flex; align-items: center; }
.speeds span { flex: 1; text-align: right; }
.speeds small { font-size: 10px; color: #aaa; }

/* window list */
.navstrip { position: relative; flex: none; height: 26px; display: flex; align-items: center; background: #f0ffff; border-bottom: 1px solid #555; border-top: 1px solid #ddd; white-space: nowrap; }
.links { align-self: stretch; width: 230px; display: flex; align-items: center; gap: 15px; padding-left: 10px; background: #fff; }
.links a { color: #0000b0; text-decoration: none; }
.links .cur { color: #c020a0; }
.asset-name { margin-left: auto; width: 125px; padding: 4px; background: #ffeef0; color: #000080; }
.hint { margin-left: 7px; width: 69px; color: #8fb0cc; }
.date, .user { font-size: 13px; color: #800000; }
.date { width: 81px; }
.user { width: 54px; }
.ime { position: absolute; right: 312px; bottom: -1px; width: 143px; height: 23px; display: flex; align-items: center; justify-content: space-between; padding: 0 2px; background: #fff; border: 1px solid #8898a8; }
.ime span { font-size: 16px; color: #4a8ec8; }

/* task bar */
.taskbar { flex: none; height: 40px; display: flex; align-items: stretch; background: linear-gradient(90deg, #7f94a8 0, #8ba1b8 60px, #a4c0dc 90px, #b0cdea 140px, #b2cfec 600px, #a4c2e0 690px, #b2cfec 760px, #a6c2de 850px, #b4d0ec 900px, #b0cce8 940px, #8497ac 985px, #8a9eb4); }
.taskbar button { justify-content: center; }
.start { width: 54px; }
.app { width: 62px; border-radius: 3px; }
.start + .app { width: 67px; }
.run { width: 59px; margin-right: 3px; border: 1px solid #5c748c; background: linear-gradient(#dce9f6, #b7cfe7); box-shadow: inset 0 0 0 1px #e8f2fc; }
.stack { width: 55px; box-shadow: inset 0 0 0 1px #e8f2fc, 4px 0 0 -1px #b4cde4, 5px 0 0 -1px #5c748c; }
.wide { width: 67px; }
.active { background: linear-gradient(#f8fbfe, #d5e4f2); }
.tray { margin-left: auto; display: flex; align-items: center; gap: 8px; color: #fff; font-family: "Noto Sans", "Noto Sans CJK SC", sans-serif; }
.restore { margin: 0 12px 0 1px; }
.temp { width: 22px; }
.arrow { margin: 0 4px 0 0; }
.tray time { margin: 0 0 0 9px; width: 68px; text-align: center; line-height: 18px; }
.peek-desk { align-self: stretch; width: 14px; margin-left: 4px; border: 1px solid #556; background: linear-gradient(120deg, #c0ccd8, #8496aa); }
```
